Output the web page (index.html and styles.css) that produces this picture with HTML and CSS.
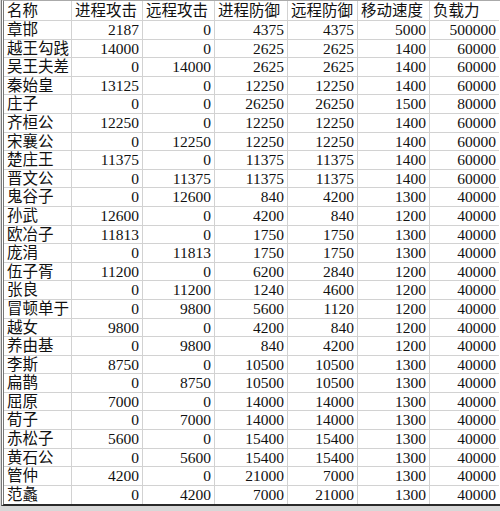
FILE: index.html
```html
<!DOCTYPE html>
<html lang="zh">
<head>
<meta charset="utf-8">
<link rel="stylesheet" href="styles.css">
</head>
<body>
<div class="sheet">
<div class="row head"><div>名称</div><div>进程攻击</div><div>远程攻击</div><div>进程防御</div><div>远程防御</div><div>移动速度</div><div>负载力</div></div>
<div class="row"><div>章邯</div><div>2187</div><div>0</div><div>4375</div><div>4375</div><div>5000</div><div>500000</div></div>
<div class="row"><div>越王勾践</div><div>14000</div><div>0</div><div>2625</div><div>2625</div><div>1400</div><div>60000</div></div>
<div class="row"><div>吴王夫差</div><div>0</div><div>14000</div><div>2625</div><div>2625</div><div>1400</div><div>60000</div></div>
<div class="row"><div>秦始皇</div><div>13125</div><div>0</div><div>12250</div><div>12250</div><div>1400</div><div>60000</div></div>
<div class="row"><div>庄子</div><div>0</div><div>0</div><div>26250</div><div>26250</div><div>1500</div><div>80000</div></div>
<div class="row"><div>齐桓公</div><div>12250</div><div>0</div><div>12250</div><div>12250</div><div>1400</div><div>60000</div></div>
<div class="row"><div>宋襄公</div><div>0</div><div>12250</div><div>12250</div><div>12250</div><div>1400</div><div>60000</div></div>
<div class="row"><div>楚庄王</div><div>11375</div><div>0</div><div>11375</div><div>11375</div><div>1400</div><div>60000</div></div>
<div class="row"><div>晋文公</div><div>0</div><div>11375</div><div>11375</div><div>11375</div><div>1400</div><div>60000</div></div>
<div class="row"><div>鬼谷子</div><div>0</div><div>12600</div><div>840</div><div>4200</div><div>1300</div><div>40000</div></div>
<div class="row"><div>孙武</div><div>12600</div><div>0</div><div>4200</div><div>840</div><div>1200</div><div>40000</div></div>
<div class="row"><div>欧冶子</div><div>11813</div><div>0</div><div>1750</div><div>1750</div><div>1300</div><div>40000</div></div>
<div class="row"><div>庞涓</div><div>0</div><div>11813</div><div>1750</div><div>1750</div><div>1300</div><div>40000</div></div>
<div class="row"><div>伍子胥</div><div>11200</div><div>0</div><div>6200</div><div>2840</div><div>1200</div><div>40000</div></div>
<div class="row"><div>张良</div><div>0</div><div>11200</div><div>1240</div><div>4600</div><div>1200</div><div>40000</div></div>
<div class="row"><div>冒顿单于</div><div>0</div><div>9800</div><div>5600</div><div>1120</div><div>1200</div><div>40000</div></div>
<div class="row"><div>越女</div><div>9800</div><div>0</div><div>4200</div><div>840</div><div>1200</div><div>40000</div></div>
<div class="row"><div>养由基</div><div>0</div><div>9800</div><div>840</div><div>4200</div><div>1200</div><div>40000</div></div>
<div class="row"><div>李斯</div><div>8750</div><div>0</div><div>10500</div><div>10500</div><div>1300</div><div>40000</div></div>
<div class="row"><div>扁鹊</div><div>0</div><div>8750</div><div>10500</div><div>10500</div><div>1300</div><div>40000</div></div>
<div class="row"><div>屈原</div><div>7000</div><div>0</div><div>14000</div><div>14000</div><div>1300</div><div>40000</div></div>
<div class="row"><div>荀子</div><div>0</div><div>7000</div><div>14000</div><div>14000</div><div>1300</div><div>40000</div></div>
<div class="row"><div>赤松子</div><div>5600</div><div>0</div><div>15400</div><div>15400</div><div>1300</div><div>40000</div></div>
<div class="row"><div>黄石公</div><div>0</div><div>5600</div><div>15400</div><div>15400</div><div>1300</div><div>40000</div></div>
<div class="row"><div>管仲</div><div>4200</div><div>0</div><div>21000</div><div>7000</div><div>1300</div><div>40000</div></div>
<div class="row last"><div>范蠡</div><div>0</div><div>4200</div><div>7000</div><div>21000</div><div>1300</div><div>40000</div></div>
</div>
</body>
</html>
```
FILE: styles.css
```css
html, body {
  margin: 0;
  padding: 0;
  background: #d8d8d8;
  width: 500px;
  height: 511px;
  overflow: hidden;
}
.sheet {
  display: grid;
  grid-template-columns: 68px 71px 72px 73px 70px 72px 69px;
  grid-template-rows: 20px repeat(26, 18.6px);
  margin-left: 1px;
  width: 499px;
  border-left: 3px double #777;
  border-top: 1px solid #aaa;
  border-bottom: 2px solid #2a2a2a;
  background: #fff;
  box-sizing: border-box;
  font-family: "Liberation Serif", "Noto Sans CJK SC", serif;
  font-size: 15.5px;
  color: #111;
}
.row {
  display: contents;
}
.row > div {
  box-sizing: border-box;
  min-height: 0;
  border-right: 1px solid #d2d2d2;
  border-bottom: 1px solid #d2d2d2;
  text-align: right;
  padding-right: 3px;
  line-height: 17.6px;
  white-space: nowrap;
  overflow: hidden;
}
.row > div:first-child {
  text-align: left;
  padding-left: 3px;
  padding-right: 0;
}
.row > div:last-child {
  border-right: none;
}
.row.head > div {
  text-align: left;
  padding-left: 3px;
  padding-right: 0;
  line-height: 19px;
}
.row.last > div {
  border-bottom: none;
}
```
